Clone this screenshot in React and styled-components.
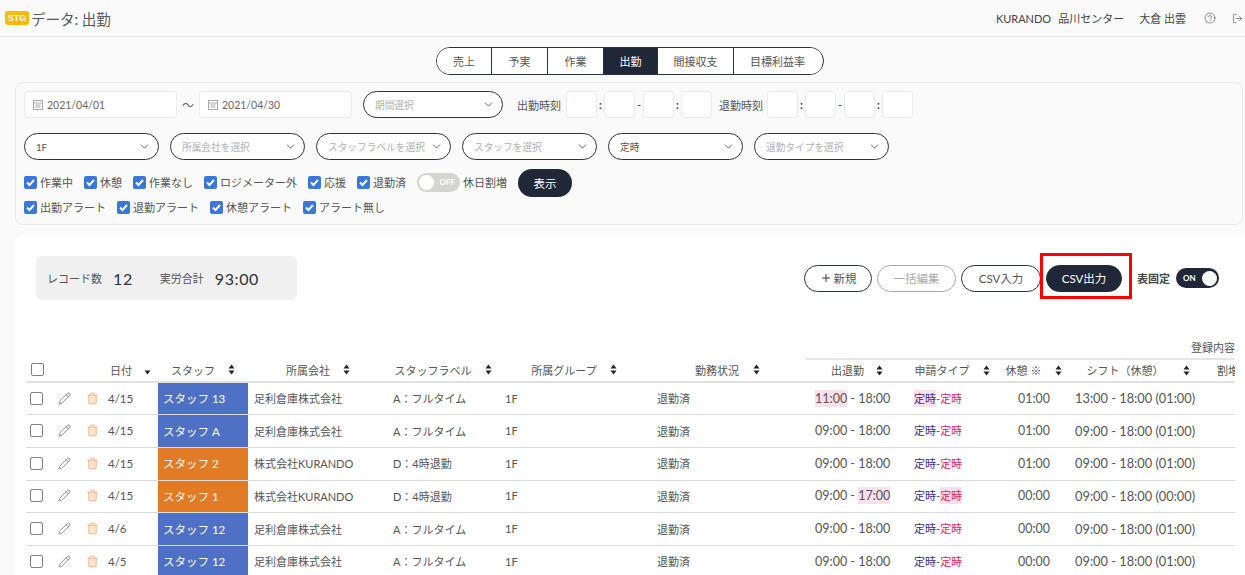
import React from 'react';
import styled, { createGlobalStyle } from 'styled-components';
import { Pencil, Trash2, CircleHelp, LogOut, ChevronDown, Plus } from 'lucide-react';

const GlobalStyle = createGlobalStyle`
  html, body {
    margin: 0;
    height: 575px;
    overflow: hidden;
    background: #fafafa;
    font-family: Lato, "Noto Sans CJK JP", sans-serif;
    font-size: 11px;
    color: #555;
  }
  * { box-sizing: border-box; }
`;

const Page = styled.div`
  width: 1245px;
  height: 575px;
  overflow: hidden;
`;

const Header = styled.header`
  height: 37px;
  display: flex;
  align-items: center;
  justify-content: space-between;
  padding: 0 2px 0 5px;
  border-bottom: 1px solid #e6e6e6;
`;

const Brand = styled.div`
  display: flex;
  align-items: center;
  gap: 2px;
`;

const Badge = styled.span`
  width: 24px;
  height: 14px;
  border-radius: 3px;
  background: #fdbb00;
  color: #fff;
  font: 700 9px/14px "Liberation Sans", sans-serif;
  text-align: center;
`;

const PageTitle = styled.h1`
  margin: 0;
  font-size: 14.5px;
  font-weight: 400;
  color: #555;
`;

const HeaderRight = styled.div`
  display: flex;
  align-items: center;
  color: #444;
  font-size: 11px;
`;

const HeaderText = styled.span`
  margin-right: ${(p) => p.$gap}px;
`;

const Tabs = styled.nav`
  width: 388px;
  height: 28px;
  margin: 10px 0 7px 436px;
  display: flex;
  border: 1.5px solid #2a3240;
  border-radius: 14px;
  overflow: hidden;
  background: #fff;
`;

const Tab = styled.div`
  flex: 0 0 ${(p) => p.$w}px;
  display: flex;
  align-items: center;
  justify-content: center;
  font-size: 11px;
  border-right: ${(p) => (p.$last ? 'none' : '1px solid #2a3240')};
  background: ${(p) => (p.$active ? '#202837' : '#fff')};
  color: ${(p) => (p.$active ? '#fff' : '#555')};
`;

const FilterPanel = styled.section`
  width: 1228px;
  height: 143px;
  margin-left: 15px;
  padding: 8px 8px 0;
  border: 1px solid #e8e8e8;
  border-radius: 8px;
`;

const FilterRow = styled.div`
  display: flex;
  align-items: center;
  height: ${(p) => p.$h}px;
  margin-bottom: ${(p) => p.$mb || 0}px;
  gap: ${(p) => p.$gap || 0}px;
`;

const DateField = styled.div`
  width: 153px;
  height: 27px;
  padding-left: 8px;
  display: flex;
  align-items: center;
  gap: 4px;
  background: #fff;
  border: 1px solid #ececec;
  border-radius: 3px;
  font-size: 10.5px;
  color: #666;
`;

const Tilde = styled.span`
  width: 22px;
  text-align: center;
  font-size: 12px;
  color: #666;
`;

const Select = styled.div`
  width: ${(p) => p.$w}px;
  margin-left: ${(p) => p.$ml || 0}px;
  height: 27px;
  padding: 0 7px 0 11px;
  display: flex;
  align-items: center;
  justify-content: space-between;
  background: #fff;
  border: 1px solid #2f3338;
  border-radius: 14px;
  font-size: 9.7px;
  white-space: nowrap;
  color: ${(p) => (p.$value ? '#555' : '#b0b0b0')};
`;

const TimeLabel = styled.span`
  font-size: 11px;
  color: #555;
  margin: 0 ${(p) => p.$mr}px 0 ${(p) => p.$ml}px;
  white-space: nowrap;
`;

const TimeBox = styled.div`
  width: 31px;
  height: 27px;
  background: #fff;
  border: 1px solid #ececec;
  border-radius: 3px;
`;

const TimeSep = styled.span`
  width: ${(p) => p.$w}px;
  text-align: center;
  font-size: 11px;
  font-weight: ${(p) => (p.$bold ? 700 : 400)};
  color: #444;
`;

const CheckItem = styled.label`
  display: flex;
  align-items: center;
  gap: 3px;
  margin-right: ${(p) => p.$mr}px;
  font-size: 11px;
  color: #555;
  white-space: nowrap;
`;

const RaisedCheck = styled(CheckItem)`
  padding-bottom: 2px;
`;

const CheckBox = styled.span`
  width: 13px;
  height: 13px;
  border-radius: 2px;
  background: #3b76d8;
  display: flex;
  align-items: center;
  justify-content: center;
`;

const OffToggle = styled.span`
  width: 43px;
  height: 19px;
  margin: 0 3px 2px 0;
  padding: 0 5px 0 2px;
  border-radius: 10px;
  background: #d4d4d0;
  display: flex;
  align-items: center;
  justify-content: space-between;
  color: #fff;
  font-size: 8px;
  font-weight: 700;
`;

const OffLabel = styled.span`
  padding-bottom: 2px;
  white-space: nowrap;
`;

const Knob = styled.span`
  width: 15px;
  height: 15px;
  border-radius: 50%;
  background: #fff;
`;

const ShowButton = styled.button`
  width: 54px;
  height: 28px;
  margin-left: 11px;
  border: none;
  border-radius: 14px;
  background: #202837;
  color: #fff;
  font: inherit;
  font-size: 11.5px;
`;

const Card = styled.section`
  width: 1230px;
  height: 345px;
  margin: 10px 0 0 15px;
  padding: 21px 9px 0 11px;
  background: #fff;
  border-radius: 8px 0 0 0;
`;

const TopBar = styled.div`
  display: flex;
  align-items: center;
  justify-content: space-between;
  height: 44px;
  padding-left: 10px;
`;

const Stats = styled.div`
  width: 261px;
  height: 44px;
  padding-left: 11px;
  display: flex;
  align-items: center;
  background: #f0f0f0;
  border-radius: 6px;
`;

const StatLabel = styled.span`
  font-size: 11px;
  color: #555;
  margin-right: 11px;
`;

const StatValue = styled.span`
  font-size: 16px;
  color: #333;
  letter-spacing: 0.6px;
  margin-right: ${(p) => p.$mr || 0}px;
`;

const Actions = styled.div`
  position: relative;
  display: flex;
  align-items: center;
  gap: 5px;
  padding-right: 17px;
`;

const ActionButton = styled.button`
  width: ${(p) => p.$w}px;
  height: 27px;
  display: flex;
  align-items: center;
  justify-content: center;
  gap: 2px;
  padding: 0;
  border-radius: 14px;
  font: inherit;
  font-size: 11.5px;
  border: 1.5px solid ${(p) => (p.$dark ? '#202837' : p.$disabled ? '#a8abab' : '#2a3240')};
  background: ${(p) => (p.$dark ? '#202837' : '#fff')};
  color: ${(p) => (p.$dark ? '#fff' : p.$disabled ? '#aaa' : '#555')};
`;

const RedBox = styled.span`
  position: absolute;
  left: 236px;
  top: -12px;
  width: 92px;
  height: 46px;
  border: 3px solid #f00;
  pointer-events: none;
`;

const FixLabel = styled.span`
  margin-left: 10px;
  font-size: 11px;
  font-weight: 700;
  color: #444;
  white-space: nowrap;
`;

const OnToggle = styled.span`
  width: 43px;
  height: 20px;
  margin-left: 1px;
  padding: 0 2px 0 7px;
  border-radius: 10px;
  background: #202837;
  display: flex;
  align-items: center;
  justify-content: space-between;
  color: #fff;
  font-size: 8px;
  font-weight: 700;
`;

const TableWrap = styled.div`
  width: 1209px;
  margin-top: 36px;
  overflow: hidden;
`;

const Table = styled.table`
  width: 1294px;
  table-layout: fixed;
  border-collapse: collapse;
`;

const GroupRow = styled.tr`
  height: 23px;
`;

const GroupCell = styled.th`
  padding: 0 0 0 386px;
  font-size: 11px;
  font-weight: 400;
  color: #555;
  text-align: left;
  white-space: nowrap;
  border-bottom: 2px solid #e6e6e6;
`;

const HeadCell = styled.th`
  height: 23px;
  padding: 0 0 1px;
  font-size: 11px;
  font-weight: 400;
  color: #555;
  white-space: nowrap;
  border-bottom: 2px solid #e3e3e3;
`;

const HeadInner = styled.div`
  display: flex;
  align-items: center;
  justify-content: ${(p) => (p.$pl !== undefined ? 'flex-start' : 'center')};
  gap: ${(p) => p.$gap ?? 12}px;
  padding-left: ${(p) => p.$pl || 0}px;
`;

const Row = styled.tr`
  height: 32.7px;
`;

const Cell = styled.td`
  padding: 0 0 1px ${(p) => p.$pl ?? 6}px;
  font-size: ${(p) => p.$size || 11}px;
  color: #555;
  white-space: nowrap;
  border-bottom: 1px solid #dcdcdc;
`;

const StaffCell = styled(Cell)`
  padding-left: 5px;
  font-size: 11.5px;
  background: ${(p) => p.$color};
  color: #fff;
`;

const EmptyBox = styled.span`
  display: block;
  width: 13px;
  height: 13px;
  border: 1px solid #808080;
  border-radius: 2px;
  background: #fff;
`;

const Flag = styled.span`
  display: inline-block;
  line-height: 17px;
  background: ${(p) => (p.$on ? '#fbe0ea' : 'transparent')};
`;

const Applied = styled(Flag)`
  color: #3b2a8c;
`;

const Actual = styled(Flag)`
  color: #e8205a;
`;

const Centered = styled.div`
  display: flex;
  align-items: center;
`;

const Sort = ({ onlyDown }) => (
  <svg width="7" height="11" viewBox="0 0 7 11" fill="#222">
    {!onlyDown && <path d="M3.5 0.5 L6.5 4.5 H0.5 Z" />}
    <path d="M3.5 10.5 L6.5 6.5 H0.5 Z" />
  </svg>
);

const Check = () => (
  <CheckBox>
    <svg width="11" height="11" viewBox="0 0 11 11" fill="none" stroke="#fff" strokeWidth="2">
      <path d="M2 5.5 L4.5 8 L9 3" />
    </svg>
  </CheckBox>
);

const CalendarIcon = () => (
  <svg width="10" height="10" viewBox="0 0 10 10" fill="none" stroke="#aaa" strokeWidth="1">
    <rect x="0.5" y="0.5" width="9" height="9" />
    <path d="M0.5 3 H9.5 M2.5 5 H7.5 M2.5 7 H7.5" />
  </svg>
);

const Chevron = () => <ChevronDown size={13} strokeWidth={1.5} color="#444" />;

const tabs = [
  ['売上', 55],
  ['予実', 56],
  ['作業', 56],
  ['出勤', 54, true],
  ['間接収支', 76],
  ['目標利益率', 87],
];

const checks1 = ['作業中', '休憩', '作業なし', 'ロジメーター外', '応援', '退勤済'];
const checks2 = ['出勤アラート', '退勤アラート', '休憩アラート', 'アラート無し'];

const selects = [
  ['1F', true],
  ['所属会社を選択'],
  ['スタッフラベルを選択'],
  ['スタッフを選択'],
  ['定時', true],
  ['退勤タイプを選択'],
];

const BLUE = '#4f71c5';
const ORANGE = '#e27b25';

const rows = [
  { date: '4/15', staff: 'スタッフ 13', color: BLUE, co: '足利倉庫株式会社', label: 'A：フルタイム', start: '11:00', end: '18:00', rest: '01:00', shift: '13:00 - 18:00 (01:00)', lateIn: true, appFlag: true },
  { date: '4/15', staff: 'スタッフ A', color: BLUE, co: '足利倉庫株式会社', label: 'A：フルタイム', start: '09:00', end: '18:00', rest: '01:00', shift: '09:00 - 18:00 (01:00)' },
  { date: '4/15', staff: 'スタッフ 2', color: ORANGE, co: '株式会社KURANDO', label: 'D：4時退勤', start: '09:00', end: '18:00', rest: '01:00', shift: '09:00 - 18:00 (01:00)' },
  { date: '4/15', staff: 'スタッフ 1', color: ORANGE, co: '株式会社KURANDO', label: 'D：4時退勤', start: '09:00', end: '17:00', rest: '00:00', shift: '09:00 - 18:00 (00:00)', earlyOut: true, actFlag: true },
  { date: '4/6', staff: 'スタッフ 12', color: BLUE, co: '足利倉庫株式会社', label: 'A：フルタイム', start: '09:00', end: '18:00', rest: '00:00', shift: '09:00 - 18:00 (01:00)' },
  { date: '4/5', staff: 'スタッフ 12', color: BLUE, co: '足利倉庫株式会社', label: 'A：フルタイム', start: '09:00', end: '18:00', rest: '00:00', shift: '09:00 - 18:00 (01:00)' },
];

// width, title, gap to the sort mark
const columns = [
  [24], [28], [24],
  [56, '日付', 12, 8, true],
  [90, 'スタッフ', 13],
  [140, '所属会社', 13],
  [110, 'スタッフラベル', 13],
  [152, '所属グループ', 13],
  [155, '勤務状況', 14],
  [104, '出退勤', 12],
  [86, '申請タイプ', 13],
  [78, '休憩 ※', 14],
  [130, 'シフト（休憩）', 19],
  [117, '割増'],
];

export default function App() {
  return (
    <Page>
      <GlobalStyle />
      <Header>
        <Brand>
          <Badge>STG</Badge>
          <PageTitle>データ: 出勤</PageTitle>
        </Brand>
        <HeaderRight>
          <HeaderText $gap={7}>KURANDO</HeaderText>
          <HeaderText $gap={15}>品川センター</HeaderText>
          <HeaderText $gap={18}>大倉 出雲</HeaderText>
          <CircleHelp size={12} strokeWidth={1.2} style={{ marginRight: 16 }} />
          <LogOut size={11} strokeWidth={1.3} />
        </HeaderRight>
      </Header>

      <Tabs>
        {tabs.map(([name, w, active], i) => (
          <Tab key={name} $w={w} $active={active} $last={i === tabs.length - 1}>{name}</Tab>
        ))}
      </Tabs>

      <FilterPanel>
        <FilterRow $h={27} $mb={15}>
          <DateField><CalendarIcon />2021/04/01</DateField>
          <Tilde>〜</Tilde>
          <DateField><CalendarIcon />2021/04/30</DateField>
          <Select $w={140} $ml={11}>期間選択<Chevron /></Select>
          <TimeLabel $ml={14} $mr={5}>出勤時刻</TimeLabel>
          <TimeBox /><TimeSep $w={7} $bold>:</TimeSep><TimeBox /><TimeSep $w={8}>-</TimeSep><TimeBox /><TimeSep $w={7} $bold>:</TimeSep><TimeBox />
          <TimeLabel $ml={7} $mr={4}>退勤時刻</TimeLabel>
          <TimeBox /><TimeSep $w={7} $bold>:</TimeSep><TimeBox /><TimeSep $w={8}>-</TimeSep><TimeBox /><TimeSep $w={7} $bold>:</TimeSep><TimeBox />
        </FilterRow>

        <FilterRow $h={27} $mb={9} $gap={11}>
          {selects.map(([text, value]) => (
            <Select key={text} $w={135} $value={value}>{text}<Chevron /></Select>
          ))}
        </FilterRow>

        <FilterRow $h={28} $mb={0}>
          {checks1.map((text) => (
            <RaisedCheck key={text} $mr={11}><Check />{text}</RaisedCheck>
          ))}
          <OffToggle><Knob />OFF</OffToggle>
          <OffLabel>休日割増</OffLabel>
          <ShowButton>表示</ShowButton>
        </FilterRow>

        <FilterRow $h={20}>
          {checks2.map((text) => (
            <CheckItem key={text} $mr={11}><Check />{text}</CheckItem>
          ))}
        </FilterRow>
      </FilterPanel>

      <Card>
        <TopBar>
          <Stats>
            <StatLabel>レコード数</StatLabel>
            <StatValue $mr={27}>12</StatValue>
            <StatLabel>実労合計</StatLabel>
            <StatValue>93:00</StatValue>
          </Stats>
          <Actions>
            <ActionButton $w={68}><Plus size={12} strokeWidth={1.8} color="#222" />新規</ActionButton>
            <ActionButton $w={79} $disabled>一括編集</ActionButton>
            <ActionButton $w={80}>CSV入力</ActionButton>
            <ActionButton $w={76} $dark>CSV出力</ActionButton>
            <RedBox />
            <FixLabel>表固定</FixLabel>
            <OnToggle>ON<Knob /></OnToggle>
          </Actions>
        </TopBar>

        <TableWrap>
          <Table>
            <colgroup>
              {columns.map(([w], i) => <col key={i} style={{ width: w }} />)}
            </colgroup>
            <thead>
              <GroupRow>
                <th colSpan={9} />
                <GroupCell colSpan={5}>登録内容</GroupCell>
              </GroupRow>
              <tr>
                <HeadCell><HeadInner $pl={5}><EmptyBox /></HeadInner></HeadCell>
                <HeadCell />
                <HeadCell />
                {columns.slice(3).map(([, name, gap, pl, onlyDown]) => (
                  <HeadCell key={name}>
                    <HeadInner $gap={gap} $pl={gap ? pl : 14}>
                      {name}
                      {gap && <Sort onlyDown={onlyDown} />}
                    </HeadInner>
                  </HeadCell>
                ))}
              </tr>
            </thead>
            <tbody>
              {rows.map((r, i) => (
                <Row key={i}>
                  <Cell $pl={4}><EmptyBox /></Cell>
                  <Cell $pl={8}><Centered><Pencil size={13} strokeWidth={1.2} color="#555" /></Centered></Cell>
                  <Cell $pl={8}><Centered><Trash2 size={13} strokeWidth={1.3} color="#f0a56a" fill="#fbe3cf" /></Centered></Cell>
                  <Cell $pl={6} $size={11.5}>{r.date}</Cell>
                  <StaffCell $color={r.color}>{r.staff}</StaffCell>
                  <Cell>{r.co}</Cell>
                  <Cell $pl={5}>{r.label}</Cell>
                  <Cell $pl={7}>1F</Cell>
                  <Cell $pl={7}>退勤済</Cell>
                  <Cell $pl={10} $size={12.5}>
                    <Flag $on={r.lateIn}>{r.start}</Flag> - <Flag $on={r.earlyOut}>{r.end}</Flag>
                  </Cell>
                  <Cell $pl={5}>
                    <Applied $on={r.appFlag}>定時</Applied>-<Actual $on={r.actFlag}>定時</Actual>
                  </Cell>
                  <Cell $pl={23} $size={12.4}>{r.rest}</Cell>
                  <Cell $pl={2} $size={12.8}>{r.shift}</Cell>
                  <Cell />
                </Row>
              ))}
            </tbody>
          </Table>
        </TableWrap>
      </Card>
    </Page>
  );
}
